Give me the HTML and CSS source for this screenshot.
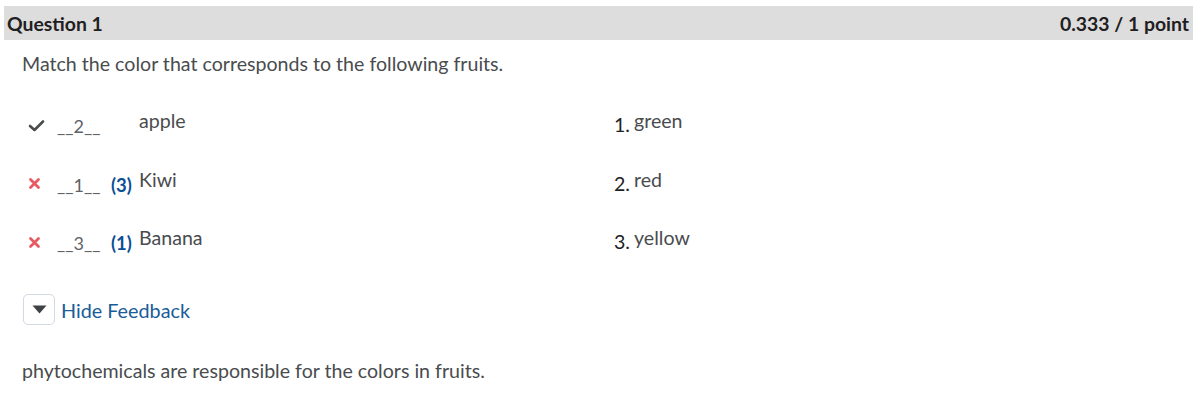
FILE: index.html
```html
<!DOCTYPE html>
<html>
<head>
<meta charset="utf-8">
<link rel="stylesheet" href="styles.css">
</head>
<body>
<div class="question">
  <div class="q-header">
    <span class="q-title">Question 1</span>
    <span class="q-score">0.333 / 1 point</span>
  </div>
  <div class="q-body">
    <p class="prompt">Match the color that corresponds to the following fruits.</p>
    <div class="match">
      <div class="match-row">
        <div class="left">
          <span class="mark"><svg class="icon-check" width="17" height="13" viewBox="0 0 17 13"><path d="M2 7 L6.5 11 L15 2.5" fill="none" stroke="#494c4e" stroke-width="2.6" stroke-linecap="round" stroke-linejoin="round"/></svg></span>
          <span class="answer">__2__</span>
          <span class="correct"></span>
          <span class="item">apple</span>
        </div>
        <div class="right"><span class="num">1.</span><span class="opt">green</span></div>
      </div>
      <div class="match-row">
        <div class="left">
          <span class="mark"><svg class="icon-x" width="13" height="13" viewBox="0 0 13 13"><path d="M2.5 2.5 L10.5 10.5 M10.5 2.5 L2.5 10.5" fill="none" stroke="#e85a62" stroke-width="2.8" stroke-linecap="round"/></svg></span>
          <span class="answer">__1__</span>
          <span class="correct">(3)</span>
          <span class="item">Kiwi</span>
        </div>
        <div class="right"><span class="num">2.</span><span class="opt">red</span></div>
      </div>
      <div class="match-row">
        <div class="left">
          <span class="mark"><svg class="icon-x" width="13" height="13" viewBox="0 0 13 13"><path d="M2.5 2.5 L10.5 10.5 M10.5 2.5 L2.5 10.5" fill="none" stroke="#e85a62" stroke-width="2.8" stroke-linecap="round"/></svg></span>
          <span class="answer">__3__</span>
          <span class="correct">(1)</span>
          <span class="item">Banana</span>
        </div>
        <div class="right"><span class="num">3.</span><span class="opt">yellow</span></div>
      </div>
    </div>
    <div class="feedback-toggle">
      <button class="toggle-btn" type="button"><svg width="15" height="9" viewBox="0 0 15 9"><path d="M0.5 0.5 H14.5 L7.5 8.5 Z" fill="#3f4244"/></svg></button>
      <a class="toggle-link">Hide Feedback</a>
    </div>
    <p class="feedback">phytochemicals are responsible for the colors in fruits.</p>
  </div>
</div>
</body>
</html>
```

FILE: styles.css
```css
html, body {
  margin: 0;
  padding: 0;
  background: #ffffff;
}
body {
  font-family: Lato, "Noto Sans", sans-serif;
  color: #494c4e;
  font-size: 19.6px;
}
.question {
  padding: 6px 0 0 4px;
}
.q-header {
  background: #dddddd;
  height: 34px;
  display: flex;
  align-items: center;
  justify-content: space-between;
  padding: 0 4px 0 3px;
  color: #1f2021;
  font-weight: 700;
  font-size: 19.4px;
}
.q-body {
  padding-left: 18px;
}
.prompt {
  margin: 12px 0 0 0;
  line-height: 24px;
}
.match {
  margin-top: 33px;
  display: flex;
  flex-direction: column;
  gap: 34.5px;
}
.match-row {
  display: flex;
  height: 24px;
  line-height: 24px;
}
.left {
  width: 592px;
  display: flex;
  align-items: flex-start;
}
.mark {
  width: 35px;
  padding-left: 6px;
  box-sizing: border-box;
  display: flex;
  align-items: center;
  height: 24px;
  padding-top: 8px;
}
.answer {
  color: #5f6366;
  width: 54px;
  padding-top: 5px;
  font-size: 18px;
}
.correct {
  color: #0c4f94;
  font-weight: 700;
  padding-top: 5px;
  width: 28px;
  font-size: 18.5px;
}
.item {
  color: #494c4e;
}
.right {
  display: flex;
  align-items: flex-start;
}
.num {
  color: #202122;
  padding-top: 4px;
  margin-right: 4px;
}
.opt {
  color: #494c4e;
}
.feedback-toggle {
  margin-top: 44px;
  display: flex;
  align-items: center;
  gap: 6px;
}
.toggle-btn {
  width: 32px;
  height: 31px;
  border: 1px solid #d3d9e3;
  border-radius: 5px;
  background: #ffffff;
  display: flex;
  align-items: center;
  justify-content: center;
  padding: 0;
  margin-left: 1px;
}
.toggle-link {
  color: #1a5c99;
  font-size: 19.8px;
}
.feedback {
  margin: 34px 0 0 0;
  line-height: 24px;
}
```
